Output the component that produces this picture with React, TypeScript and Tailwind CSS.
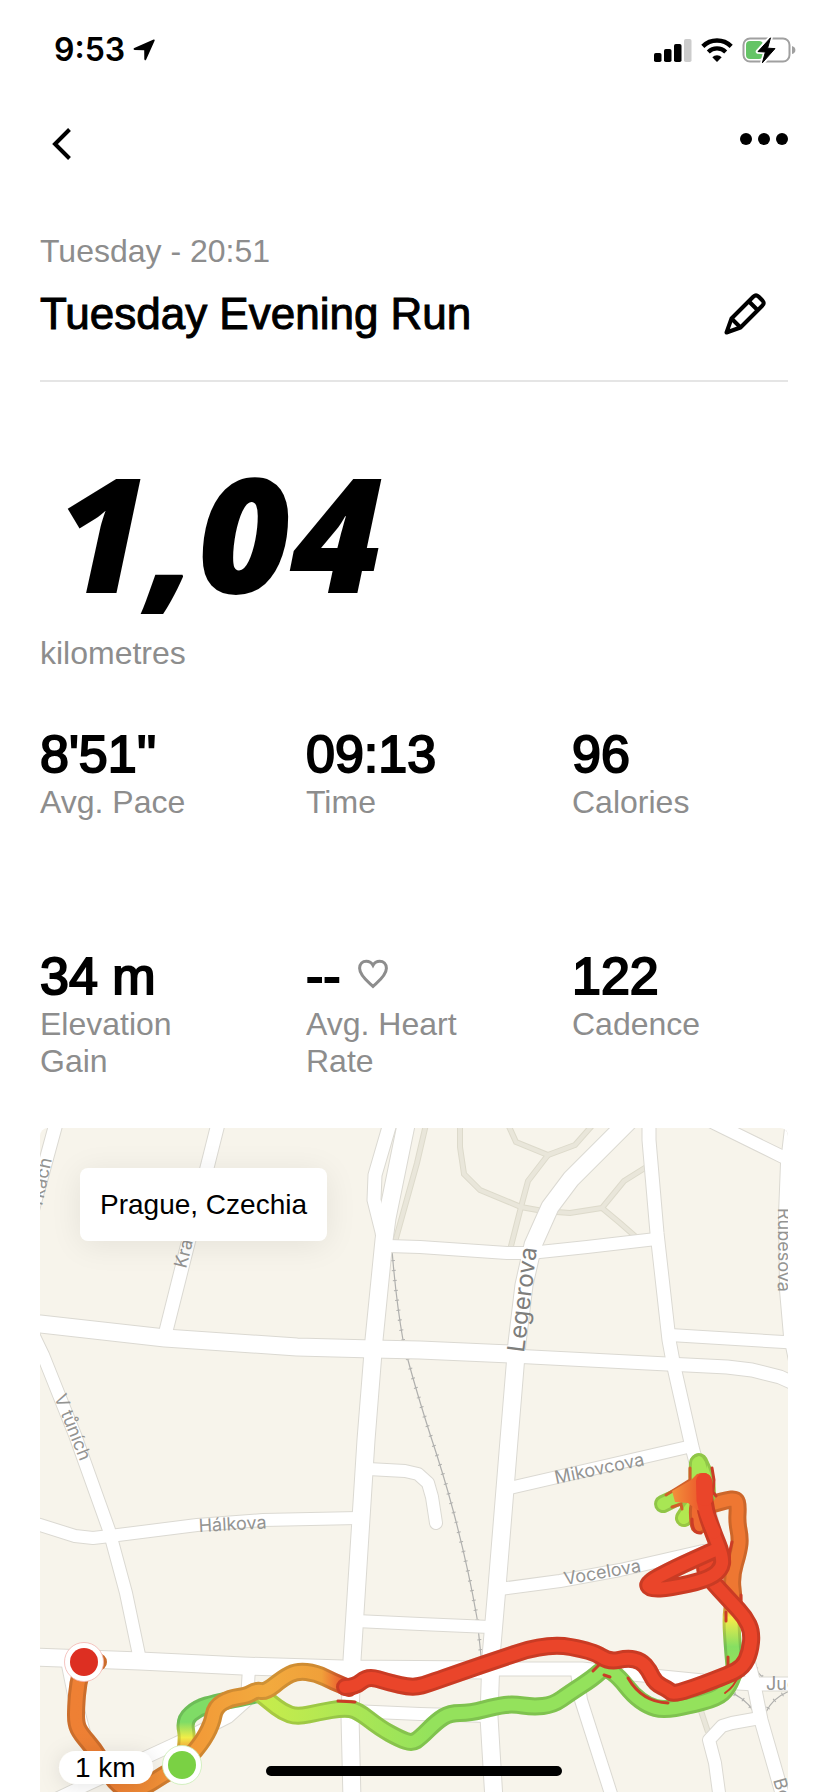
import React from 'react';

type Point = [number, number];

interface Road {
  points: Point[];
  width: number;
}

interface StatProps {
  value: React.ReactNode;
  label: string;
}

const stats: StatProps[] = [
  { value: "8'51''", label: 'Avg. Pace' },
  { value: '09:13', label: 'Time' },
  { value: '96', label: 'Calories' },
  { value: '34 m', label: 'Elevation Gain' },
  {
    value: (
      <span className="flex items-center gap-4">
        --
        <HeartIcon />
      </span>
    ),
    label: 'Avg. Heart Rate',
  },
  { value: '122', label: 'Cadence' },
];

const ROADS: Road[] = [
  { width: 13, points: [[57, 1120], [33, 1208]] },
  { width: 13, points: [[219, 1120], [165, 1335]] },
  { width: 17, points: [[30, 1323], [40, 1324], [165, 1338], [297, 1347], [373, 1349], [420, 1350], [512, 1354]] },
  { width: 13, points: [[512, 1356], [667, 1364], [727, 1367], [752, 1370], [780, 1377], [800, 1386]] },
  { width: 12, points: [[30, 1328], [43, 1355], [75, 1435], [109, 1530], [126, 1593], [139, 1655]] },
  { width: 13, points: [[391, 1120], [375, 1175], [374, 1200], [382, 1232], [384, 1245]] },
  { width: 17, points: [[407, 1120], [387, 1218], [384, 1240], [374, 1340], [366, 1440], [352, 1660], [350, 1716], [352, 1800]] },
  { width: 12, points: [[30, 1522], [40, 1525], [75, 1536], [93, 1538], [110, 1536], [197, 1525], [263, 1520], [358, 1518]] },
  { width: 12, points: [[368, 1469], [405, 1471], [418, 1474], [428, 1483], [432, 1497], [436, 1523]] },
  { width: 12, points: [[356, 1621], [420, 1624], [490, 1627]] },
  { width: 17, points: [[30, 1657], [140, 1661], [243, 1666], [343, 1669], [490, 1670]] },
  { width: 13, points: [[490, 1669], [582, 1669], [703, 1681], [755, 1684], [800, 1684]] },
  { width: 17, points: [[630, 1120], [594, 1156], [571, 1179], [550, 1207], [533, 1245], [524, 1285], [517, 1343], [509, 1440], [497, 1587], [491, 1657], [489, 1717], [494, 1800]] },
  { width: 12, points: [[388, 1246], [420, 1247], [507, 1253], [530, 1253], [587, 1247], [656, 1239]] },
  { width: 13, points: [[649, 1120], [649, 1140], [657, 1233], [669, 1340], [674, 1367], [692, 1447], [753, 1680], [761, 1720], [784, 1800]] },
  { width: 12, points: [[708, 1120], [724, 1128], [783, 1157], [800, 1166]] },
  { width: 14, points: [[793, 1120], [788, 1163], [786, 1215], [787, 1290], [791, 1336], [797, 1365]] },
  { width: 12, points: [[670, 1335], [800, 1343]] },
  { width: 12, points: [[505, 1489], [692, 1446]] },
  { width: 12, points: [[500, 1589], [560, 1581], [620, 1570], [703, 1551]] },
  { width: 12, points: [[577, 1672], [581, 1700], [613, 1800]] },
  { width: 12, points: [[352, 1711], [420, 1714], [488, 1716]] },
  { width: 12, points: [[249, 1668], [247, 1700], [228, 1717], [177, 1743], [73, 1791], [50, 1802]] },
  { width: 12, points: [[67, 1660], [74, 1695], [86, 1740]] },
  { width: 12, points: [[760, 1718], [732, 1723], [722, 1726], [709, 1740], [715, 1763], [720, 1800]] },
];

const FOOTPATHS: Point[][] = [
  [[460, 1120], [460, 1147], [464, 1174], [480, 1190], [521, 1207], [543, 1211], [570, 1213], [602, 1208], [624, 1181], [648, 1166]],
  [[506, 1120], [516, 1142], [548, 1155], [575, 1145], [597, 1120]],
  [[548, 1155], [528, 1181], [521, 1207], [510, 1250]],
  [[602, 1208], [620, 1223], [636, 1237]],
  [[427, 1120], [417, 1163], [395, 1242]],
  [[700, 1708], [708, 1732]],
];

const RAILS: string[] = [
  'M392 1250 Q396 1300 403 1340 L408 1360 Q416 1390 430 1434 Q444 1476 453 1510 Q468 1566 477 1618 L482 1665',
  'M725 1690 Q745 1697 754 1712',
  'M792 1690 Q773 1697 766 1712',
  'M756 1668 Q759 1676 766 1679',
];

const GREEN_TRACK: Point[] = [
  [258, 1692], [270, 1702], [283, 1712], [297, 1717], [320, 1712], [343, 1708], [357, 1710], [380, 1728],
  [400, 1739], [412, 1743], [420, 1738], [437, 1721], [450, 1713], [470, 1713], [497, 1706], [513, 1704],
  [533, 1707], [553, 1705], [570, 1693], [593, 1678], [605, 1667], [619, 1677], [633, 1695], [648, 1706],
  [663, 1710], [687, 1706], [717, 1698], [728, 1688], [735, 1670],
];

const BACK_TRACK: Point[] = [
  [735, 1672], [733, 1650], [731, 1617], [734, 1600], [731, 1577], [739, 1550], [740, 1537], [737, 1522],
  [738, 1506], [736, 1499], [727, 1500], [706, 1506],
];

const START_TRACK: Point[] = [
  [184, 1760], [188, 1740], [184, 1720], [198, 1708], [215, 1703], [240, 1698], [258, 1694],
];

const ORANGE_TRACK: Point[] = [
  [98, 1662], [84, 1662], [78, 1683], [76, 1707], [76, 1724], [81, 1734], [94, 1749], [106, 1768], [117, 1785],
  [130, 1791], [145, 1787], [163, 1775], [182, 1765], [201, 1744], [212, 1724], [215, 1707], [230, 1698],
  [247, 1696], [256, 1690], [266, 1692], [283, 1678], [297, 1671], [316, 1673], [334, 1682], [349, 1688],
];

const RED_TRACK: Point[] = [
  [345, 1687], [355, 1687], [368, 1676], [387, 1682], [413, 1688], [430, 1683], [487, 1663], [548, 1643],
  [593, 1651], [609, 1662], [628, 1658], [641, 1661], [649, 1670], [655, 1683], [669, 1690], [674, 1695],
  [728, 1675], [743, 1667], [750, 1652], [752, 1632], [745, 1617], [732, 1603], [708, 1577], [704, 1567],
  [709, 1556], [722, 1557],
];

const RED_LOOP: Point[] = [
  [703, 1482], [704, 1505], [712, 1530], [723, 1557], [721, 1570], [706, 1580], [670, 1588], [650, 1589],
  [647, 1583], [673, 1569], [715, 1550],
];

const toLine = (points: Point[]) => 'M' + points.map(([x, y]) => `${x} ${y}`).join(' L');

// Rounds the corners of a track by curving through segment midpoints
const toCurve = (points: Point[]) => {
  let d = `M${points[0][0]} ${points[0][1]}`;
  for (let i = 1; i < points.length - 1; i++) {
    const [x, y] = points[i];
    const [nx, ny] = points[i + 1];
    d += ` Q${x} ${y} ${(x + nx) / 2} ${(y + ny) / 2}`;
  }
  const last = points[points.length - 1];
  return `${d} L${last[0]} ${last[1]}`;
};

const Track = ({ points, stroke }: { points: Point[]; stroke: string }) => {
  const d = toCurve(points);
  return (
    <g fill="none" strokeLinecap="round" strokeLinejoin="round">
      <path d={d} stroke={stroke} strokeWidth={18} />
      <path d={d} stroke="#000" strokeOpacity={0.14} strokeWidth={18} />
      <path d={d} stroke={stroke} strokeWidth={12} />
    </g>
  );
};

function HeartIcon() {
  return (
    <svg className="mb-1 h-[30px] w-[32px]" viewBox="0 0 32 30" fill="none" stroke="#8d8d8d" strokeWidth={3}>
      <path d="M16 27.5 C12 23.5 2.6 17 2.6 9.3 C2.6 5 5.6 2.2 9.3 2.2 C12.2 2.2 14.6 3.7 16 6.3 C17.4 3.7 19.8 2.2 22.7 2.2 C26.4 2.2 29.4 5 29.4 9.3 C29.4 17 20 23.5 16 27.5 Z" />
    </svg>
  );
}

const PencilIcon = () => (
  <svg
    className="h-[42px] w-[42px]"
    viewBox="0 0 42 42"
    fill="none"
    stroke="#000"
    strokeWidth={4}
    strokeLinejoin="round"
  >
    <path d="M2.5 39.5 L7.5 25.5 L29.5 3.5 Q32 1.2 34.5 3.5 L38.5 7.5 Q40.8 10 38.5 12.5 L16.5 34.5 Z" />
    <path d="M25 8.5 L33.5 17 M7.5 25.5 L16.5 34.5" />
  </svg>
);

const StatusBar = () => (
  <div className="flex h-[100px] items-center justify-between pr-8 pl-[54px]">
    <div className="flex items-center gap-2">
      <span className="font-[Inter,sans-serif] text-[32px] leading-9 font-semibold">9:53</span>
      <svg className="h-[22px] w-[22px]" viewBox="0 0 22 22">
        <path d="M20.6 0.6 Q22 0.2 21.6 1.7 L13.2 20.6 Q12 22.4 11.3 20.3 L11.2 11.2 L1.6 10.9 Q-0.4 10.2 1.3 9 Z" />
      </svg>
    </div>
    <div className="flex items-center gap-[9px]">
      <svg className="h-6 w-[38px]" viewBox="0 0 38 24">
        <rect x="0" y="15" width="7.5" height="9" rx="1.8" />
        <rect x="10" y="11" width="7.5" height="13" rx="1.8" />
        <rect x="20" y="6" width="7.5" height="18" rx="1.8" />
        <rect x="30" y="1" width="7.5" height="23" rx="1.8" fill="#cccccc" />
      </svg>
      <svg className="h-6 w-8" viewBox="0 0 32 24" fill="none" stroke="#000">
        <path d="M1.8 8.4 A20.2 20.2 0 0 1 30.2 8.4" strokeWidth="4.4" />
        <path d="M7.3 14 A12.4 12.4 0 0 1 24.7 14" strokeWidth="4.2" />
        <path d="M16 24 L11.3 19.2 A6.7 6.7 0 0 1 20.7 19.2 Z" fill="#000" stroke="none" />
      </svg>
      <svg className="h-7 w-[54px]" viewBox="0 0 54 28">
        <rect x="1.5" y="2.5" width="46" height="23" rx="6.5" fill="none" stroke="#a0a0a0" strokeWidth="2" />
        <path d="M50 10 Q53.4 11 53.4 14 Q53.4 17 50 18 Z" fill="#a0a0a0" />
        <rect x="4" y="5" width="17" height="18" rx="4" fill="#65c466" />
        <path
          d="M28.5 1.8 L16 15.6 L23.4 16 L20.4 26.8 L33 12.6 L25.6 12.2 Z"
          stroke="#fff"
          strokeWidth="4.5"
          strokeLinejoin="round"
        />
        <path d="M28.5 1.8 L16 15.6 L23.4 16 L20.4 26.8 L33 12.6 L25.6 12.2 Z" stroke="#000" strokeLinejoin="round" />
      </svg>
    </div>
  </div>
);

const NavBar = () => (
  <nav className="flex h-[88px] items-center justify-between px-10">
    <button type="button" aria-label="Back" className="px-3">
      <svg className="h-8 w-5" viewBox="0 0 20 32" fill="none" stroke="#000" strokeWidth={4}>
        <path d="M17.5 1.5 L3 16 L17.5 30.5" />
      </svg>
    </button>
    <button type="button" aria-label="More" className="pb-2.5">
      <svg className="h-3 w-12" viewBox="0 0 48 12">
        <circle cx="6" cy="6" r="6" />
        <circle cx="24" cy="6" r="6" />
        <circle cx="42" cy="6" r="6" />
      </svg>
    </button>
  </nav>
);

const Stat = ({ value, label }: StatProps) => (
  <div>
    <p className="text-[52px] leading-14 [-webkit-text-stroke:2px_black]">{value}</p>
    <p className="mt-0.5 max-w-[180px] text-[32px] leading-[37px] text-[#8d8d8d]">{label}</p>
  </div>
);

const RunMap = () => (
  <div className="relative mx-10 mt-12 overflow-hidden rounded-t-lg">
    {/* Drawn in page units, offset to the map's own origin */}
    <svg className="block w-full" viewBox="40 1128 748 664">
      <defs>
        <linearGradient id="green" gradientUnits="userSpaceOnUse" x1="265" y1="0" x2="430" y2="0">
          <stop offset="0" stopColor="#c6ec4c" />
          <stop offset="1" stopColor="#94e25c" />
        </linearGradient>
        <linearGradient id="back" gradientUnits="userSpaceOnUse" x1="0" y1="1592" x2="0" y2="1665">
          <stop offset="0" stopColor="#ee7732" />
          <stop offset="0.15" stopColor="#ee7732" />
          <stop offset="0.35" stopColor="#f8ec48" />
          <stop offset="0.75" stopColor="#86df62" />
          <stop offset="1" stopColor="#94e25c" />
        </linearGradient>
        <linearGradient id="start" gradientUnits="userSpaceOnUse" x1="0" y1="1748" x2="0" y2="1722">
          <stop offset="0" stopColor="#f0a33a" />
          <stop offset="0.4" stopColor="#f2ee48" />
          <stop offset="1" stopColor="#7fdc66" />
        </linearGradient>
        <linearGradient id="orange" gradientUnits="userSpaceOnUse" x1="76" y1="0" x2="349" y2="0">
          <stop offset="0" stopColor="#ee8034" />
          <stop offset="0.12" stopColor="#ec7e33" />
          <stop offset="0.45" stopColor="#f29b38" />
          <stop offset="0.7" stopColor="#f2aa3e" />
          <stop offset="0.9" stopColor="#f0a03a" />
          <stop offset="1" stopColor="#ea452a" />
        </linearGradient>
        <linearGradient id="spur" gradientUnits="userSpaceOnUse" x1="670" y1="0" x2="700" y2="0">
          <stop offset="0" stopColor="#f2963c" />
          <stop offset="1" stopColor="#ec5a2c" />
        </linearGradient>
        <filter id="pill" x="-30%" y="-60%" width="160%" height="220%">
          <feDropShadow dx="0" dy="2" stdDeviation="10" floodOpacity="0.1" />
        </filter>
      </defs>

      <rect x="40" y="1128" width="748" height="664" fill="#f7f4eb" />

      <g fill="none">
        {FOOTPATHS.map((p, i) => (
          <path key={i} d={toLine(p)} stroke="#dddacb" strokeWidth={6} />
        ))}
        {FOOTPATHS.map((p, i) => (
          <path key={i} d={toLine(p)} stroke="#e9e6da" strokeWidth={4} />
        ))}
        {RAILS.map((d) => (
          <g key={d} stroke="#b0b0ae">
            <path d={d} strokeWidth={1.2} />
            <path d={d} strokeWidth={4} strokeDasharray="1 9" />
          </g>
        ))}
      </g>

      <g fill="none" strokeLinejoin="round" strokeLinecap="round">
        {ROADS.map((road, i) => (
          <path key={i} d={toLine(road.points)} stroke="#dbd9d2" strokeWidth={road.width + 2} />
        ))}
        {ROADS.map((road, i) => (
          <path key={i} d={toLine(road.points)} stroke="#fff" strokeWidth={road.width} />
        ))}
      </g>

      <g className="font-[Inter,sans-serif] text-[18px]" fill="#949492">
        <text transform="translate(42 1206) rotate(-78)">rkách</text>
        <text transform="translate(186 1269) rotate(-76)">Krakovská</text>
        <text transform="translate(54 1397) rotate(68)">V tůních</text>
        <text transform="translate(199 1532) rotate(-3)">Hálkova</text>
        <text transform="translate(556 1484) rotate(-12)">Mikovcova</text>
        <text transform="translate(565 1585) rotate(-10)">Vocelova</text>
        <text transform="translate(778 1208) rotate(90)">Rubešova</text>
        <text x="766" y="1690">Jugoslávská</text>
        <text transform="translate(773 1780) rotate(74)">Bělehradská</text>
        <text transform="translate(524 1353) rotate(-83)" className="text-2xl" fill="#7e7e7c">
          Legerova
        </text>
      </g>

      <Track points={START_TRACK} stroke="url(#start)" />
      <Track points={GREEN_TRACK} stroke="url(#green)" />
      <Track points={BACK_TRACK} stroke="url(#back)" />
      <Track points={ORANGE_TRACK} stroke="url(#orange)" />

      {/* Turnaround point where the GPS signal jumps about */}
      <Track points={[[699, 1462], [706, 1476], [707, 1495]]} stroke="#a8e654" />
      <Track points={[[698, 1463], [697, 1478], [700, 1495]]} stroke="#a8e654" />
      <Track points={[[663, 1504], [684, 1494], [702, 1485]]} stroke="#a8e654" />
      <Track points={[[684, 1518], [690, 1508], [700, 1500]]} stroke="#b2e850" />
      <Track points={[[699, 1525], [697, 1512], [700, 1500]]} stroke="#ee6a30" />
      <path d="M693 1462 Q699 1450 705 1462 L709 1476 L693 1478 Z" fill="#a8e654" />
      <g fill="none" stroke="#cb3c26" strokeWidth={3} strokeLinecap="round">
        <path d="M690 1468 L690 1480 L666 1495" stroke="#d0602a" />
        <path d="M712 1468 L714 1480 L713 1492 L716 1496" />
        <path d="M672 1507 L681 1504 L682 1509" stroke="#d0602a" />
        <path d="M692 1519 Q692 1534 701 1533" />
        <path d="M726 1612 L726 1621 M728 1657 L728 1667" />
        <path d="M741 1595 L741 1604 M732 1542 L729 1555" />
        <path d="M593 1671 L600 1664 M604 1675 L610 1677 M628 1678 Q642 1702 668 1703" />
        <path d="M338 1701 L355 1702" />
        <path d="M725 1693 Q735 1686 738 1676" strokeWidth={2} />
      </g>

      <Track points={RED_TRACK} stroke="#ea452a" />
      <Track points={RED_LOOP} stroke="#ea452a" />
      <path
        d="M672 1491 L691 1480 L697 1474 Q703 1472 709 1475 L713 1497 L704 1512 L697 1510 L688 1503 L675 1502 Z"
        fill="url(#spur)"
      />
      <path
        d="M703 1482 L703 1500 Q706 1516 714 1532"
        stroke="#ea452a"
        strokeWidth={13}
        strokeLinecap="round"
        fill="none"
      />
      <path d="M704 1481 L705 1498" stroke="#ea452a" strokeWidth={16} strokeLinecap="round" />

      <rect x="59" y="1751" width="94" height="33" rx="16.5" fill="#fff" filter="url(#pill)" />
      <text x="75" y="1777" className="text-[28px]">
        1 km
      </text>

      <circle cx="84" cy="1662" r="19.5" fill="#fff" stroke="#f3b5b0" strokeWidth="0.8" />
      <circle cx="84" cy="1662" r="14" fill="#dd2f22" />
      <circle cx="182" cy="1765" r="19.5" fill="#fff" stroke="#c9eeb4" strokeWidth="0.8" />
      <circle cx="182" cy="1765" r="14" fill="#7ad144" />
    </svg>

    <div className="absolute top-10 left-10 rounded-lg bg-white px-5 py-[18px] text-[28px] leading-[37px] shadow-[0_4px_32px_rgba(0,0,0,0.08)]">
      Prague, Czechia
    </div>
  </div>
);

export default function App() {
  return (
    <div className="min-h-screen bg-white font-['Liberation_Sans',Arial,sans-serif] text-black">
      <StatusBar />
      <NavBar />

      <header className="mx-10 mt-[45px] border-b-2 border-[#e5e5e5] pb-[42px]">
        <p className="text-[32px] leading-9 text-[#8d8d8d]">Tuesday - 20:51</p>
        <div className="mt-[21px] flex items-center justify-between pr-[22px]">
          <h1 className="text-[44px] leading-12 [-webkit-text-stroke:1px_black]">Tuesday Evening Run</h1>
          <button type="button" aria-label="Edit name">
            <PencilIcon />
          </button>
        </div>
      </header>

      <section className="mx-10 mt-[66px]">
        <p className="pl-4 font-['Open_Sans',sans-serif] text-[160px] leading-[166px] font-extrabold italic">1,04</p>
        <p className="mt-[21px] text-[32px] leading-9 text-[#8d8d8d]">kilometres</p>
      </section>

      <section className="mx-10 mt-[55px] grid grid-cols-[266fr_266fr_216fr] gap-y-[127px]">
        {stats.map((stat) => (
          <Stat key={stat.label} {...stat} />
        ))}
      </section>

      <RunMap />

      <div className="fixed bottom-4 left-1/2 h-2.5 w-[296px] -translate-x-1/2 rounded-full bg-black" />
    </div>
  );
}
